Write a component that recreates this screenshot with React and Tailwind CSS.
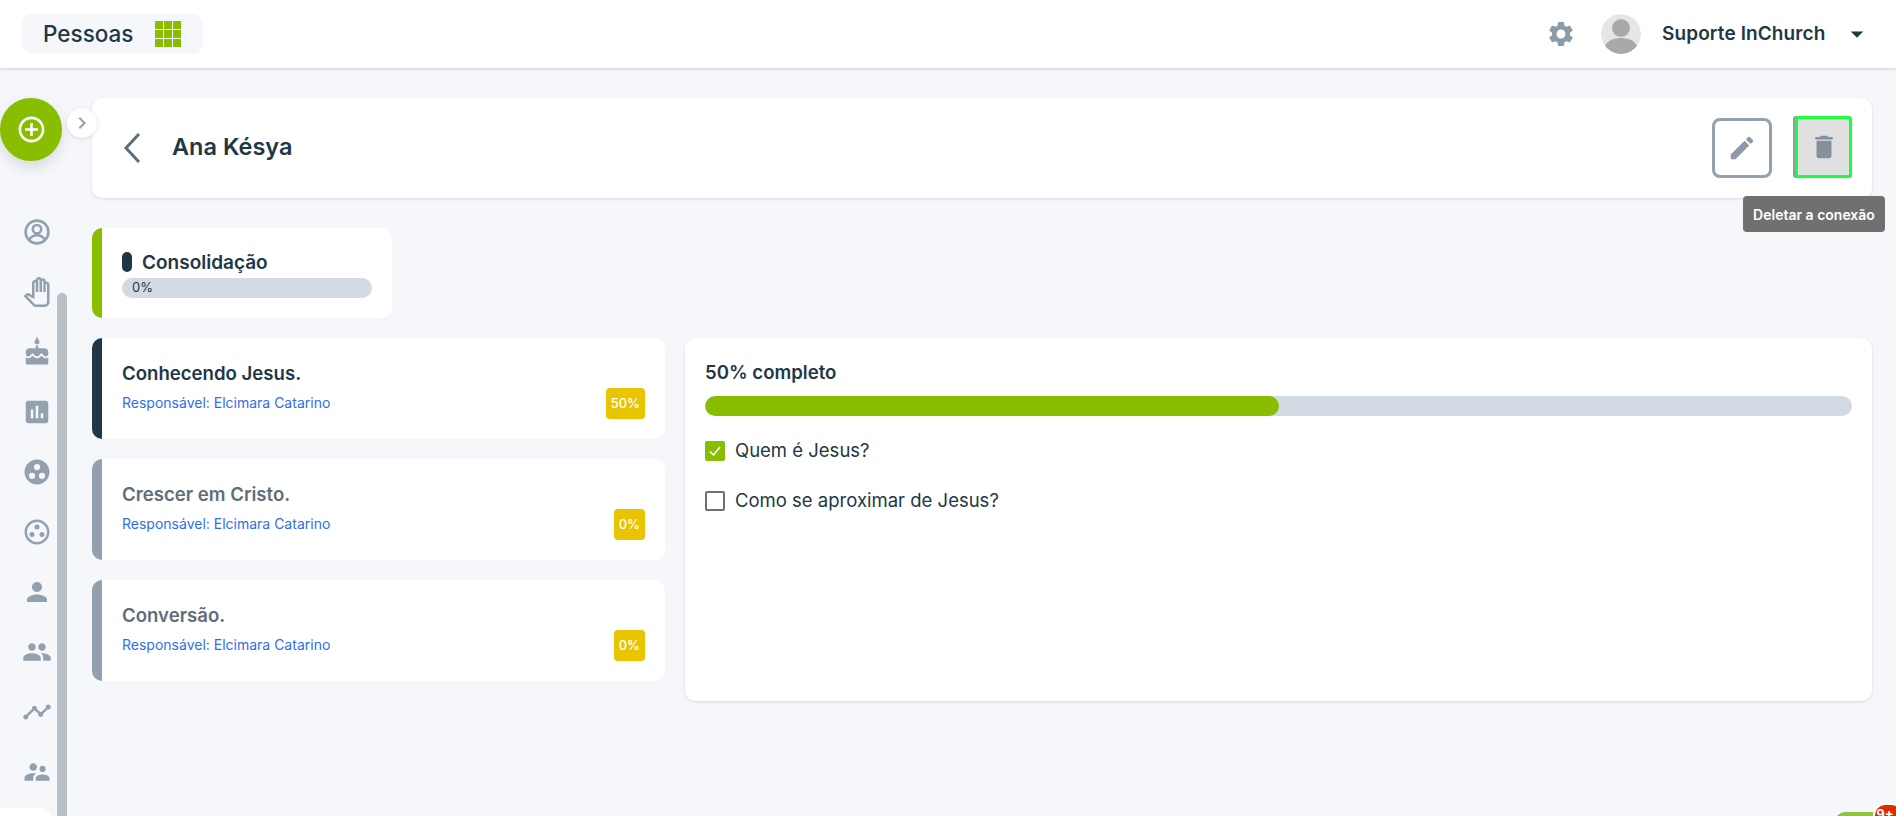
import React from 'react';
import {
  MdAddCircleOutline, MdArrowDropDown, MdAssessment, MdCake, MdChevronRight, MdDelete, MdEdit,
  MdGroupWork, MdOutlineGroupWork, MdOutlinePanTool, MdPeople, MdPerson,
  MdSettings, MdSupervisorAccount, MdTimeline,
} from 'react-icons/md';

const UserRing = ({ className }) => (
  <svg viewBox="0 0 30 30" className={className} fill="none" stroke="currentColor" strokeWidth="2.6">
    <circle cx="15" cy="15" r="11.4" />
    <circle cx="15" cy="12.2" r="4.2" />
    <path d="M7.2 23c1.6-3.2 4.4-4.8 7.8-4.8s6.2 1.6 7.8 4.8" />
  </svg>
);

const sideIcons = [
  UserRing, MdOutlinePanTool, MdCake, MdAssessment, MdGroupWork,
  MdOutlineGroupWork, MdPerson, MdPeople, MdTimeline, MdSupervisorAccount,
];

const steps = [
  { title: 'Conhecendo Jesus.', percent: '50%', active: true },
  { title: 'Crescer em Cristo.', percent: '0%', active: false },
  { title: 'Conversão.', percent: '0%', active: false },
];

const StepCard = ({ step }) => (
  <div className={`relative h-[101px] rounded-[10px] border-l-[10px] bg-white pl-[20px] pt-[20px] ${step.active ? 'border-[#223746]' : 'border-[#92a1ad]'}`}>
    <h3 className={`text-[18.6px] font-semibold leading-[30px] ${step.active ? 'text-[#223746]' : 'text-[#5f6e7a]'}`}>{step.title}</h3>
    <p className="mt-[3px] text-[14px] leading-[24px] text-[#2f6fed]">Responsável: Elcimara Catarino</p>
    <span className="absolute bottom-[20px] right-[20px] flex h-[31px] min-w-[31px] items-center justify-center rounded-[4px] bg-[#e9c400] px-[5px] text-[13px] font-medium text-white">{step.percent}</span>
  </div>
);

const Sidebar = () => (
  <aside className="relative w-[92px] shrink-0">
    <div className="flex h-[63px] w-[62px] items-center justify-center rounded-full bg-[#88bd00] shadow-[0_6px_14px_rgba(0,0,0,0.12)]">
      <MdAddCircleOutline className="text-[31px] text-white" />
    </div>
    <span className="absolute left-[67px] top-[10px] z-10 flex h-[30px] w-[30px] items-center justify-center rounded-full bg-white text-[#92a1ad] shadow-[0_1px_4px_rgba(0,0,0,0.12)]">
      <MdChevronRight className="text-[24px]" />
    </span>
    <div className="mt-[56px] flex w-[74px] flex-col items-center gap-[30px]">
      {sideIcons.map((Icon, i) => <Icon key={i} className="size-[30px] text-[#92a1ad]" />)}
    </div>
    <div className="absolute left-[57px] top-[195px] h-[600px] w-[10px] rounded-t-[5px] bg-[#b8bfc7]" />
    <div className="absolute left-0 top-[710px] h-[20px] w-[51px] rounded-tr-[10px] bg-white" />
  </aside>
);

export default function App() {
  return (
    <div className="relative h-[816px] overflow-hidden bg-[#f5f7fb] font-['Inter',sans-serif] text-[#223746]">
      <header className="flex h-[68px] items-center justify-between bg-white pl-[22px] pr-[24px] shadow-[0_1px_3px_rgba(0,0,0,0.18)]">
        <div className="flex h-[40px] w-[181px] items-center justify-between rounded-[10px] bg-[#f5f7fb] pl-[21px] pr-[22px]">
          <span className="text-[22.5px] font-medium">Pessoas</span>
          <svg viewBox="0 0 26 26" className="size-[26px]" fill="#88bd00">
            <rect x="0" y="0" width="8" height="8" /><rect x="9" y="0" width="8" height="8" /><rect x="18" y="0" width="8" height="8" />
            <rect x="0" y="9" width="8" height="8" /><rect x="9" y="9" width="8" height="8" /><rect x="18" y="9" width="8" height="8" />
            <rect x="0" y="18" width="8" height="8" /><rect x="9" y="18" width="8" height="8" /><rect x="18" y="18" width="8" height="8" />
          </svg>
        </div>
        <div className="flex items-center">
          <MdSettings className="size-[30px] text-[#8c9ba8]" />
          <svg viewBox="0 0 40 40" className="ml-[25px] size-[40px] rounded-full">
            <circle cx="20" cy="20" r="20" fill="#e6e6e6" />
            <circle cx="20" cy="14" r="9" fill="#a9a9a9" />
            <path d="M4 32c3-6 9-8 16-8s13 2 16 8c-4 5-10 8-16 8S8 37 4 32z" fill="#a9a9a9" />
          </svg>
          <span className="ml-[21px] w-[166px] whitespace-nowrap text-[19px] font-semibold tracking-[0.1px]">Suporte InChurch</span>
          <MdArrowDropDown className="ml-[14px] size-[30px]" />
        </div>
      </header>

      <div className="flex pt-[30px]">
        <Sidebar />
        <main className="mr-[24px] min-w-0 flex-1">
          <section className="flex h-[100px] items-center justify-between rounded-[10px] bg-white pl-[31px] pr-[20px] shadow-[0_1px_3px_rgba(0,0,0,0.12)]">
            <div className="flex items-center">
              <svg viewBox="0 0 18 30" className="h-[30px] w-[18px]" fill="none" stroke="#5f6e7a" strokeWidth="3">
                <path d="M16 1 3 15l13 14" />
              </svg>
              <h1 className="ml-[31px] -translate-y-[1px] text-[23.5px] font-semibold">Ana Késya</h1>
            </div>
            <div className="mb-[2px] flex h-[62px] items-end gap-[23px]">
              <button className="flex size-[60px] items-center justify-center rounded-[8px] border-[3px] border-[#92a1ad] bg-white">
                <MdEdit className="size-[30px] text-[#8c9ba8]" />
              </button>
              <button className="flex h-[62px] w-[57px] items-center justify-center rounded-[3px] border-[3px] border-[#1aff3d] bg-[#e0e0e0] shadow-[-2px_0_0_#8c9ba8]">
                <MdDelete className="size-[30px] text-[#84919c]" />
              </button>
            </div>
          </section>

          <section className="mt-[30px] h-[90px] w-[300px] rounded-[10px] border-l-[10px] border-[#88bd00] bg-white pl-[20px] pr-[20px] pt-[22px]">
            <div className="flex items-center gap-[10px]">
              <span className="h-[20px] w-[10px] rounded-[5px] bg-[#223746]" />
              <span className="translate-y-[1px] text-[19px] font-semibold leading-[24px]">Consolidação</span>
            </div>
            <div className="mt-[4px] h-[20px] rounded-[10px] bg-[#d2dbe3] pl-[10px] text-[13px] leading-[18px]">0%</div>
          </section>

          <div className="mt-[20px] flex items-start gap-[20px]">
            <div className="flex w-[573px] shrink-0 flex-col gap-[20px]">
              {steps.map((step) => <StepCard key={step.title} step={step} />)}
            </div>
            <section className="h-[363px] flex-1 rounded-[10px] bg-white px-[20px] pt-[20px] shadow-[0_1px_3px_rgba(0,0,0,0.12)]">
              <p className="text-[18.6px] font-semibold leading-[28px]">50% completo</p>
              <div className="mt-[10px] h-[20px] overflow-hidden rounded-[10px] bg-[#d2dbe3]">
                <div className="h-full rounded-[10px] bg-[#88bd00]" style={{ width: '50%' }} />
              </div>
              <label className="mt-[25px] flex h-[20px] items-center gap-[10px] text-[18.5px]">
                <span className="flex size-[20px] items-center justify-center rounded-[2px] bg-[#88bd00]">
                  <svg viewBox="0 0 20 20" className="size-[20px]" fill="none" stroke="white" strokeWidth="1.6"><path d="M5 10.5 8.5 14 15 6" /></svg>
                </span>
                <span>Quem é Jesus?</span>
              </label>
              <label className="mt-[30px] flex h-[20px] items-center gap-[10px] text-[18.5px]">
                <span className="size-[20px] rounded-[2px] border-2 border-[#707070] bg-white" />
                <span>Como se aproximar de Jesus?</span>
              </label>
            </section>
          </div>
        </main>
      </div>

      <div className="absolute left-[1743px] top-[196px] flex h-[36px] w-[142px] items-center justify-center whitespace-nowrap rounded-[4px] bg-[#707070] text-[14px] font-semibold text-white">Deletar a conexão</div>

      <div className="absolute left-[1835px] top-[812px] h-[20px] w-[90px] rounded-full bg-[#8cc63f]" />
      <div className="absolute left-[1873px] top-[803px] flex h-[24px] w-[30px] justify-center rounded-full border-2 border-white bg-[#dd2c00] pr-[6px] text-[13px] font-bold leading-[18px] text-white">9+</div>
    </div>
  );
}
